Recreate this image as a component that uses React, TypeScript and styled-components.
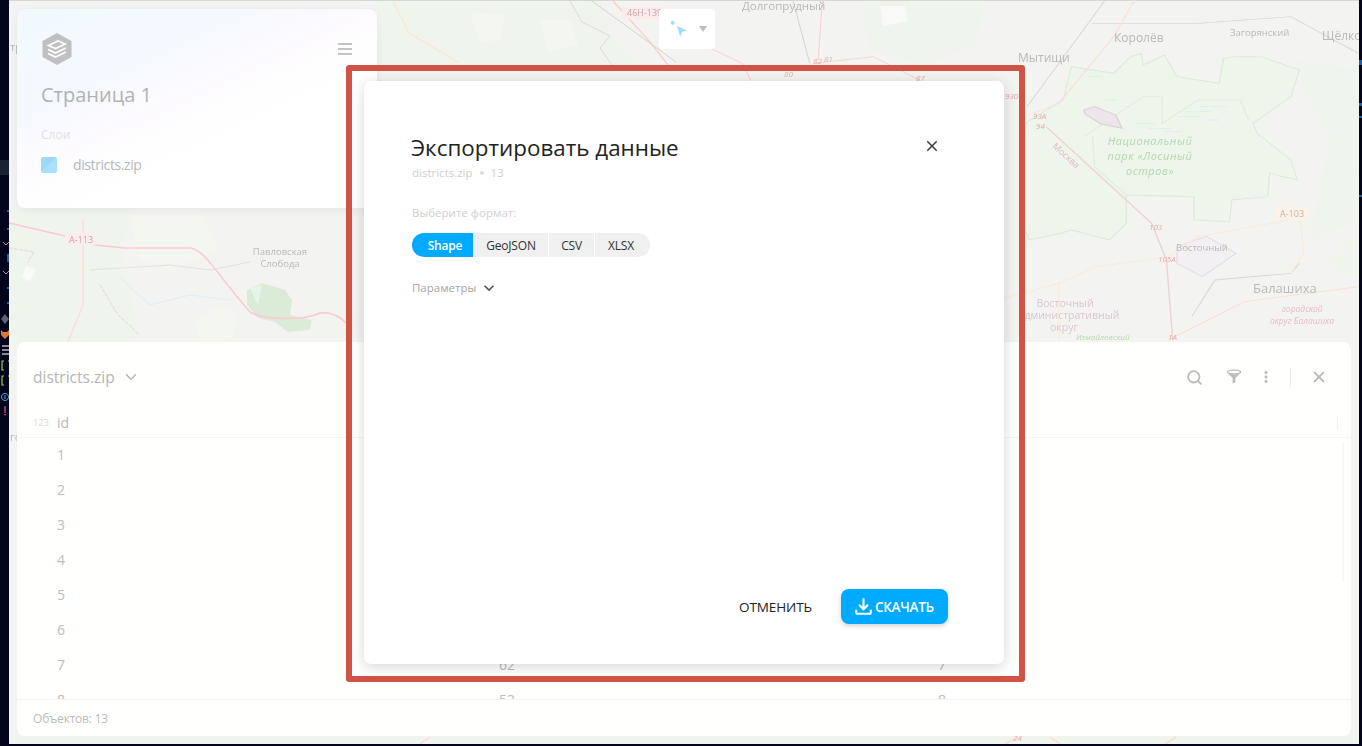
import styled, { createGlobalStyle } from "styled-components";
import { FiChevronDown, FiSearch, FiX } from "react-icons/fi";
import { MdClose, MdKeyboardArrowDown, MdMoreVert, MdOutlineFileDownload } from "react-icons/md";

const GlobalStyle = createGlobalStyle`
  html, body, #root { margin: 0; padding: 0; width: 100%; height: 100%; overflow: hidden; }
  body { background: #01041a; font-family: "Open Sans", "Noto Sans", sans-serif; }
  * { box-sizing: border-box; }
`;

const Stage = styled.div`
  position: relative;
  width: 1362px;
  height: 746px;
  padding: 0 3px 2px 9px;
  overflow: hidden;
`;

const MapCanvas = styled.svg`
  display: block;
  width: 100%;
  height: 100%;
  filter: blur(0.45px);
`;

const EdgeStrip = styled.svg<{ $right?: boolean }>`
  position: absolute;
  top: 0;
  ${(p) => (p.$right ? "right: 0;" : "left: 0;")}
  width: ${(p) => (p.$right ? 3 : 9)}px;
  height: 746px;
`;

const PagePanel = styled.section`
  position: absolute;
  left: 17px;
  top: 9px;
  width: 360px;
  height: 199px;
  padding: 24px 25px 24px 24px;
  border-radius: 8px;
  background: linear-gradient(155deg, #f0f9ff 0%, #f5f9ff 30%, #fdfbff 45%, #ffffff 62%);
  box-shadow: 0 2px 8px rgba(0, 0, 0, 0.06);
`;

const PageHead = styled.div`
  display: flex;
  align-items: center;
  justify-content: space-between;
  height: 32px;
`;

const MenuIcon = styled.div`
  position: relative;
  width: 14px;
  height: 12px;
  border-top: 2px solid #c4c4c4;
  border-bottom: 2px solid #c4c4c4;
  &::after {
    content: "";
    position: absolute;
    left: 0;
    right: 0;
    top: 3px;
    height: 2px;
    background: #c4c4c4;
  }
`;

const PageTitle = styled.h2`
  margin: 16px 0 0;
  font-size: 20px;
  line-height: 28px;
  font-weight: 400;
  color: #b2b2b2;
`;

const LayersLabel = styled.div`
  margin-top: 18px;
  font-size: 12px;
  line-height: 16px;
  color: #e2e2e2;
`;

const LayerRow = styled.div`
  display: flex;
  align-items: center;
  gap: 16px;
  margin-top: 12px;
  font-size: 14px;
  letter-spacing: -0.4px;
  color: #b8b8b8;
`;

const LayerSwatch = styled.span`
  width: 16px;
  height: 16px;
  border-radius: 2px;
  background: linear-gradient(135deg, #9fd8f4 50%, #a8e0ff 50%);
`;

const ToolButton = styled.div`
  position: absolute;
  left: 659px;
  top: 9px;
  width: 56px;
  height: 40px;
  display: flex;
  align-items: center;
  gap: 7px;
  padding-left: 11px;
  border-radius: 4px;
  background: #fff;
`;

const Caret = styled.span`
  width: 0;
  height: 0;
  border-left: 4px solid transparent;
  border-right: 4px solid transparent;
  border-top: 6px solid #bdbdbd;
`;

const TablePanel = styled.section`
  position: absolute;
  left: 17px;
  top: 342px;
  width: 1334px;
  height: 394px;
  display: flex;
  flex-direction: column;
  border-radius: 8px;
  background: #fffffd;
`;

const TableHead = styled.header`
  display: flex;
  align-items: center;
  height: 66px;
  flex: none;
  padding: 4px 23px 0 16px;
`;

const TableName = styled.div`
  display: flex;
  align-items: center;
  gap: 7px;
  font-size: 15.5px;
  color: #b6b6b6;
  svg { color: #b6b6b6; }
`;

const TableTools = styled.div`
  margin-left: auto;
  display: flex;
  align-items: center;
  color: #bcbcbc;
`;

const ToolSlot = styled.span<{ $w: number }>`
  display: flex;
  justify-content: center;
  width: ${(p) => p.$w}px;
`;

const ToolDivider = styled.span`
  width: 1px;
  height: 20px;
  margin: 0 19px 0 12px;
  background: #ededed;
`;

const ColumnHead = styled.div`
  position: relative;
  display: grid;
  grid-template-columns: 24px 1fr;
  align-items: center;
  height: 30px;
  flex: none;
  padding-left: 16px;
  border-bottom: 1px solid #f5f5f3;
  font-size: 14px;
  color: #b8b8b8;
  &::after {
    content: "";
    position: absolute;
    right: 13px;
    top: 7px;
    width: 1px;
    height: 15px;
    background: #f2f2f0;
  }
`;

const TypeTag = styled.span`
  font-size: 9px;
  letter-spacing: 0.2px;
  color: #d9d9d9;
`;

const TableBody = styled.div`
  position: relative;
  flex: 1;
  overflow: hidden;
  &::after {
    content: "";
    position: absolute;
    right: 7px;
    top: 4px;
    width: 2px;
    height: 140px;
    background: #f8f8f5;
  }
`;

const Row = styled.div`
  display: grid;
  grid-template-columns: 409px 444px 1fr;
  height: 35px;
  padding: 7px 0 0 40px;
  font-size: 14px;
  line-height: 19px;
  color: #bdbdbd;
`;

const Cell = styled.span<{ $left?: number }>`
  padding-left: ${(p) => p.$left ?? 0}px;
`;

const TableFoot = styled.footer`
  display: flex;
  align-items: center;
  height: 37px;
  flex: none;
  padding-left: 16px;
  border-top: 1px solid #f5f5f3;
  font-size: 12px;
  letter-spacing: -0.2px;
  color: #bcbcbc;
`;

const Frame = styled.div`
  position: absolute;
  left: 346px;
  top: 65px;
  width: 679px;
  height: 617px;
  border: 6px solid #d15345;
  border-radius: 3px;
`;

const Dialog = styled.div`
  position: absolute;
  left: 364px;
  top: 81px;
  width: 640px;
  height: 583px;
  display: flex;
  flex-direction: column;
  padding: 51px 56px 40px 48px;
  border-radius: 7px;
  background: #fff;
  box-shadow: 0 3px 14px rgba(0, 0, 0, 0.16);
`;

const DialogHead = styled.div`
  display: flex;
  align-items: flex-start;
  justify-content: space-between;
  padding-right: 7px;
`;

const DialogTitle = styled.h1`
  margin: 0 0 0 -1px;
  font-size: 22.4px;
  line-height: 32px;
  font-weight: 400;
  color: #222;
`;

const CloseButton = styled.button`
  display: flex;
  margin: 5px 0 0;
  padding: 0;
  border: 0;
  background: none;
  color: #3c3c3c;
`;

const Meta = styled.div`
  display: flex;
  align-items: center;
  gap: 7px;
  margin-top: 1px;
  font-size: 11.5px;
  line-height: 16px;
  color: #cfcfcf;
`;

const MetaDot = styled.span`
  width: 4px;
  height: 4px;
  border-radius: 50%;
  background: #dcdcdc;
`;

const FieldLabel = styled.div`
  margin-top: 24px;
  font-size: 11.5px;
  line-height: 16px;
  color: #d0d0d0;
`;

const Segments = styled.div`
  display: flex;
  gap: 1px;
  margin-top: 12px;
`;

const Segment = styled.button<{ $active?: boolean; $w: number; $shift?: number }>`
  width: ${(p) => p.$w}px;
  height: 24px;
  padding: 0 ${(p) => p.$shift ?? 0}px 0 ${(p) => (p.$active ? 5 : 0)}px;
  border: 0;
  font-family: inherit;
  font-size: 12px;
  font-weight: ${(p) => (p.$active ? 600 : 400)};
  letter-spacing: -0.2px;
  color: ${(p) => (p.$active ? "#fff" : "#333")};
  background: ${(p) => (p.$active ? "#00aaff" : "#f0f0f0")};
  &:first-child { border-radius: 12px 0 0 12px; }
  &:last-child { border-radius: 0 12px 12px 0; }
`;

const Params = styled.div`
  display: flex;
  align-items: center;
  gap: 3px;
  margin-top: 21px;
  font-size: 11.5px;
  line-height: 16px;
  color: #a6a6a6;
  svg { color: #555; }
`;

const DialogFoot = styled.div`
  display: flex;
  align-items: center;
  justify-content: flex-end;
  gap: 29px;
  margin-top: auto;
`;

const CancelButton = styled.button`
  padding: 0;
  border: 0;
  background: none;
  font-family: inherit;
  font-size: 13.5px;
  letter-spacing: -0.1px;
  color: #222;
`;

const DownloadButton = styled.button`
  display: flex;
  align-items: center;
  width: 107px;
  height: 35px;
  padding: 0 0 0 10px;
  border: 0;
  border-radius: 8px;
  background: #00aaff;
  box-shadow: 0 2px 5px rgba(0, 0, 0, 0.18);
  font-family: inherit;
  font-size: 13.5px;
  font-weight: 600;
  letter-spacing: -0.3px;
  color: #fff;
  span { margin-left: -1px; }
`;

const Logo = () => (
  <svg width="32" height="32" viewBox="0 0 32 32">
    <path d="M16 0 30.5 8v16L16 32 1.5 24V8z" fill="#c0c0c0" />
    <path d="M7.5 12.5 17 8l7 3-9.5 4.5z" fill="none" stroke="#fff" strokeWidth="1.8" />
    <path d="M7 16.5 14.5 20 25 15M7 20.5 14.5 24 25 19" fill="none" stroke="#fff" strokeWidth="1.8" />
  </svg>
);

const FilterIcon = () => (
  <svg width="16" height="16" viewBox="0 0 16 16">
    <ellipse cx="8" cy="3" rx="6.6" ry="1.8" fill="none" stroke="#bcbcbc" strokeWidth="1.3" />
    <path d="M1.8 4.2 6.6 9v5.4l2.8-1V9l4.8-4.8C11 5.6 5 5.6 1.8 4.2z" fill="#bcbcbc" />
  </svg>
);

const CursorIcon = () => (
  <svg width="22" height="22" viewBox="0 0 22 22">
    <circle cx="2.7" cy="4.7" r="2" fill="#9bdcff" />
    <path d="M7 8 17.5 12.7 12 13.7 10.3 19z" fill="#9bdcff" />
  </svg>
);

// левый край: кусок панели редактора за окном
const LeftStrip = () => (
  <EdgeStrip viewBox="0 0 9 746">
    <rect x="0" y="160" width="9" height="15" fill="#1a2332" />
    <g fill="#1c5fa8">
      <rect x="7" y="210" width="2" height="2" />
      <rect x="7" y="228" width="2" height="2" />
      <rect x="7" y="254" width="2" height="8" />
      <rect x="7" y="287" width="2" height="2" />
      <rect x="7" y="302" width="2" height="2" />
    </g>
    <g fill="none" stroke="#9aa0ac" strokeWidth="1">
      <path d="M3 242l3 3 3-3M3 271l3 3 3-3" />
    </g>
    <path d="M5 314l4 5-4 5-4-5z" fill="#5a6470" />
    <path d="M1 330l2 2h4l2-2v5l-4 4-4-4z" fill="#e2762c" />
    <path d="M2 346h7M2 350h7M2 354h7" stroke="#b8b8b8" strokeWidth="1.4" />
    <path d="M4 361H2v9h2M8 361h1M4 376H2v9h2M8 376h1" fill="none" stroke="#a6c83c" strokeWidth="1.2" />
    <circle cx="5" cy="397" r="3.6" fill="none" stroke="#4a9ad0" strokeWidth="1" />
    <rect x="4.5" y="395" width="1" height="4" fill="#4a9ad0" />
    <path d="M5 406v7" stroke="#c040a0" strokeWidth="1.4" />
    <rect x="4.3" y="414" width="1.4" height="1.4" fill="#e05060" />
  </EdgeStrip>
);

const RightStrip = () => (
  <EdgeStrip $right viewBox="0 0 3 746">
    <g fill="#1c5fa8">
      <rect x="0" y="60" width="3" height="5" />
      <rect x="0" y="103" width="3" height="3" />
      <rect x="0" y="116" width="3" height="2" />
      <rect x="0" y="195" width="3" height="2" />
    </g>
  </EdgeStrip>
);

// карта под панелями: координаты как на странице
const MoscowMap = () => (
  <MapCanvas viewBox="9 0 1350 744" preserveAspectRatio="none">
    <rect x="0" y="0" width="1362" height="744" fill="#f3f4f2" />
    <rect x="9" y="0" width="1350" height="1" fill="#d6d6d6" />

    {/* леса и застройка */}
    <g fill="#eff4ec">
      <path d="M9 208H130L122 250 140 342H9z" />
      <path d="M378 1H600L612 40 640 65H378z" />
      <path d="M860 1H985L975 45 925 65 870 50z" />
      <path d="M1290 60 1358 70V220L1310 240 1330 140z" />
      <path d="M9 737H1359V744H9z" />
    </g>
    <g fill="#f3f7ef">
      <path d="M470 12 505 15 500 40 480 42zM540 20h30l8 25-30 6z" />
      <path d="M130 215h70l20 35-50 20-30-10zM195 320l25-15 20 10-10 27h-30z" />
    </g>
    <g fill="#fafafa" opacity="0.9">
      <path d="M26 265 36 270 30 282 22 277z" />
      <path d="M880 6h25l3 15-25 5z" />
    </g>
    <path d="M247 290 262 283 285 290 292 300 290 315 312 320 310 330 288 332 275 322 258 318 247 305z" fill="#dcebd8" />
    <path d="M250 288 262 285 258 305z" fill="#e6f5ea" />
    <path d="M300 285 H346 V342 H318z" fill="#f0f4ec" opacity="0.5" />

    <g transform="translate(700 0) scale(0.4221 0.3333)">
      <path
        d="M770 370 860 300 880 200 980 220 1020 170 1045 160 1050 195 1100 165 1130 230 1230 250 1240 175 1265 170 1330 170 1420 210 1400 290 1310 370 1320 400 1400 480 1415 540 1350 520 1345 590 1260 600 1255 665 1170 660 1170 590 1010 585 1010 670 970 720 880 690 855 700 780 720 770 690z"
        fill="#eef5ea"
        stroke="#dcebd7"
        strokeWidth="3"
      />
      <path d="M910 410 1050 290 1095 290 1095 370 1180 300 1280 300 1300 360M930 410 935 500 1010 585" fill="none" stroke="#e0eddb" strokeWidth="3" />
      <path d="M1500 380 1560 300V530L1530 510zM1490 790 1560 700V840z" fill="#eff5eb" />
      <path d="M910 330 935 320 985 345 1000 385 950 372 912 342z" fill="#ece6ea" stroke="#dccfd9" strokeWidth="3" />
      <path d="M1130 740 1200 710 1270 760 1190 830 1130 790z" fill="#f3f0f3" stroke="#e6dbe6" strokeWidth="3" />
      <g stroke="#d9eef8" strokeWidth="2.5">
        <path d="M1030 370h50M1060 385h60M1130 350h50M1150 335h60M1180 320h70M1200 360h30M1100 395h40" />
        <path d="M910 210h30M920 230h30M960 300h30M990 320h30" />
      </g>
      <path d="M775 320 960 0M930 70H1180L1400 50 1560 160" fill="none" stroke="#d6d6d6" strokeWidth="2.5" />
      <path d="M220 0 260 190" fill="none" stroke="#d6d6d6" strokeWidth="2.5" />
      <path d="M1165 950 1220 840 1400 820 1420 790" fill="none" stroke="#d6d6d6" strokeWidth="2.5" />
      <path d="M1030 0 980 110 850 310 790 340" fill="none" stroke="#fbe0d6" strokeWidth="3" />
      <path d="M1560 860 1290 905 1110 1020" fill="none" stroke="#fbe0d6" strokeWidth="3" />
      <path d="M1440 650 1180 710 1110 770 940 800 850 850 720 895" fill="none" stroke="#fbe9d6" strokeWidth="3" />
      <path d="M1420 640 1430 760 1400 820M850 850V1020" fill="none" stroke="#f8ecd8" strokeWidth="3" />
      <path d="M820 380 1070 670 1105 780 1120 1020" fill="none" stroke="#f0d2d2" strokeWidth="3.5" />
      <path d="M0 130 100 190 120 240M290 0 280 180M270 190 410 170 520 240" fill="none" stroke="#fbd3d3" strokeWidth="3" />
    </g>

    <g fill="none" strokeLinecap="round">
      <path d="M9 223 65 236 95 245 125 248H190C205 250 212 268 250 312 262 319 300 322 320 313 330 312 340 316 346 323" stroke="#fbc9d0" strokeWidth="1.5" />
      <path d="M83 220V305L68 342" stroke="#fbdcd8" strokeWidth="1.3" />
      <path d="M393 1 409 33 458 62" stroke="#fbe6d2" strokeWidth="1.3" />
      <path d="M613 1 650 42 668 65" stroke="#fbd0c8" strokeWidth="1.3" />
      <path d="M592 1 676 62" stroke="#d2d2d2" strokeWidth="1" />
      <path d="M570 1 582 22 610 36 600 48 612 65" stroke="#e2d8e4" strokeWidth="1" />
      <path d="M120 278 150 305 190 295 230 300" stroke="#ddeef6" strokeWidth="1" />
      <path d="M10 248 34 252 28 262M100 285 118 315 140 335" stroke="#dccfd6" strokeWidth="0.8" strokeDasharray="3 2" />
      <path d="M90 270 170 265 210 270 250 262" stroke="#dcdcdc" strokeWidth="0.8" />
      <path d="M430 737 420 744M1005 744 1018 737M1165 744 1176 737M1060 744 1050 737" stroke="#fbd9d0" strokeWidth="1.2" />
    </g>

    <g fontFamily="'Open Sans', sans-serif" fill="#b9b9b9">
      <text x="10" y="51" fontSize="11">тр</text>
      <text x="10" y="441" fontSize="11">го</text>
      <rect x="65" y="233" width="31" height="12" rx="2" fill="#fdecec" />
      <text x="69" y="243" fontSize="9" fill="#c8a4a4">A-113</text>
      <rect x="1276" y="207" width="32" height="13" rx="2" fill="#fdf2e8" />
      <text x="1280" y="217" fontSize="9" fill="#c4b4a6">A-103</text>
      <rect x="622" y="7" width="43" height="12" rx="2" fill="#fdeaea" />
      <text x="627" y="16" fontSize="9" fill="#cba6a6">46Н-139</text>
      <text x="742" y="10" fontSize="11.5">Долгопрудный</text>
      <text x="1114" y="42" fontSize="12">Королёв</text>
      <text x="1230" y="36" fontSize="9.5">Загорянский</text>
      <text x="1322" y="40" fontSize="12">Щёлково</text>
      <text x="1018" y="62" fontSize="12">Мытищи</text>
      <text x="1176" y="251" fontSize="9.5">Восточный</text>
      <text x="1253" y="293" fontSize="13">Балашиха</text>
      <text x="280" y="255" fontSize="9.5" textAnchor="middle">Павловская</text>
      <text x="280" y="267" fontSize="9.5" textAnchor="middle">Слобода</text>
      <g fill="#b4d8b0" fontStyle="italic" fontSize="11" letterSpacing="0.55" textAnchor="middle">
        <text x="1150" y="145">Национальный</text>
        <text x="1150" y="160">парк «Лосиный</text>
        <text x="1150" y="175">остров»</text>
      </g>
      <g fill="#dcc6d4" fontSize="10.5" textAnchor="middle">
        <text x="1065" y="307">Восточный</text>
        <text x="1069" y="319">административный</text>
        <text x="1064" y="331">округ</text>
      </g>
      <g fill="#e6bcc2" fontStyle="italic" fontSize="8.5">
        <text x="1282" y="312">городской</text>
        <text x="1270" y="324">округ Балашиха</text>
      </g>
      <text x="1076" y="340" fontSize="8" fill="#b8d8b4" fontStyle="italic">Измайловский</text>
      <text x="1052" y="147" fontSize="9" fill="#dcb8c4" transform="rotate(42 1052 147)">Москва</text>
      <g fontSize="8" fill="#e8aaaa" fontStyle="italic">
        <text x="813" y="64">82</text>
        <text x="824" y="62">81</text>
        <text x="784" y="77">80</text>
        <text x="916" y="81">87</text>
        <text x="1005" y="99">930</text>
        <text x="1033" y="119">93А</text>
        <text x="1036" y="129">94</text>
        <text x="1149" y="230">103</text>
        <text x="1158" y="262">105А</text>
        <text x="1168" y="340">1А</text>
        <text x="1013" y="741">24</text>
      </g>
    </g>
  </MapCanvas>
);

const rows = [
  { id: 1, value: "", ref: "" },
  { id: 2, value: "", ref: "" },
  { id: 3, value: "", ref: "" },
  { id: 4, value: "", ref: "" },
  { id: 5, value: "", ref: "" },
  { id: 6, value: "", ref: "" },
  { id: 7, value: "62", ref: "7" },
  { id: 8, value: "53", ref: "8" },
];

export default function App() {
  return (
    <Stage>
      <GlobalStyle />
      <MoscowMap />
      <LeftStrip />
      <RightStrip />

      <PagePanel>
        <PageHead>
          <Logo />
          <MenuIcon />
        </PageHead>
        <PageTitle>Страница 1</PageTitle>
        <LayersLabel>Слои</LayersLabel>
        <LayerRow>
          <LayerSwatch />
          districts.zip
        </LayerRow>
      </PagePanel>

      <ToolButton>
        <CursorIcon />
        <Caret />
      </ToolButton>

      <TablePanel>
        <TableHead>
          <TableName>
            districts.zip
            <FiChevronDown size={18} />
          </TableName>
          <TableTools>
            <ToolSlot $w={40}><FiSearch size={17} strokeWidth={2.6} /></ToolSlot>
            <ToolSlot $w={40}><FilterIcon /></ToolSlot>
            <ToolSlot $w={24}><MdMoreVert size={18} /></ToolSlot>
            <ToolDivider />
            <ToolSlot $w={18}><FiX size={18} strokeWidth={2.4} /></ToolSlot>
          </TableTools>
        </TableHead>
        <ColumnHead>
          <TypeTag>123</TypeTag>
          id
        </ColumnHead>
        <TableBody>
          {rows.map((r) => (
            <Row key={r.id}>
              <Cell>{r.id}</Cell>
              <Cell $left={33}>{r.value}</Cell>
              <Cell $left={28}>{r.ref}</Cell>
            </Row>
          ))}
        </TableBody>
        <TableFoot>Объектов: 13</TableFoot>
      </TablePanel>

      <Frame />

      <Dialog>
        <DialogHead>
          <DialogTitle>Экспортировать данные</DialogTitle>
          <CloseButton><MdClose size={18} /></CloseButton>
        </DialogHead>
        <Meta>
          districts.zip
          <MetaDot />
          13
        </Meta>
        <FieldLabel>Выберите формат:</FieldLabel>
        <Segments>
          <Segment $active $w={61}>Shape</Segment>
          <Segment $w={74}>GeoJSON</Segment>
          <Segment $w={45}>CSV</Segment>
          <Segment $w={55} $shift={3}>XLSX</Segment>
        </Segments>
        <Params>
          Параметры
          <MdKeyboardArrowDown size={20} />
        </Params>
        <DialogFoot>
          <CancelButton>ОТМЕНИТЬ</CancelButton>
          <DownloadButton>
            <MdOutlineFileDownload size={25} />
            <span>СКАЧАТЬ</span>
          </DownloadButton>
        </DialogFoot>
      </Dialog>
    </Stage>
  );
}
